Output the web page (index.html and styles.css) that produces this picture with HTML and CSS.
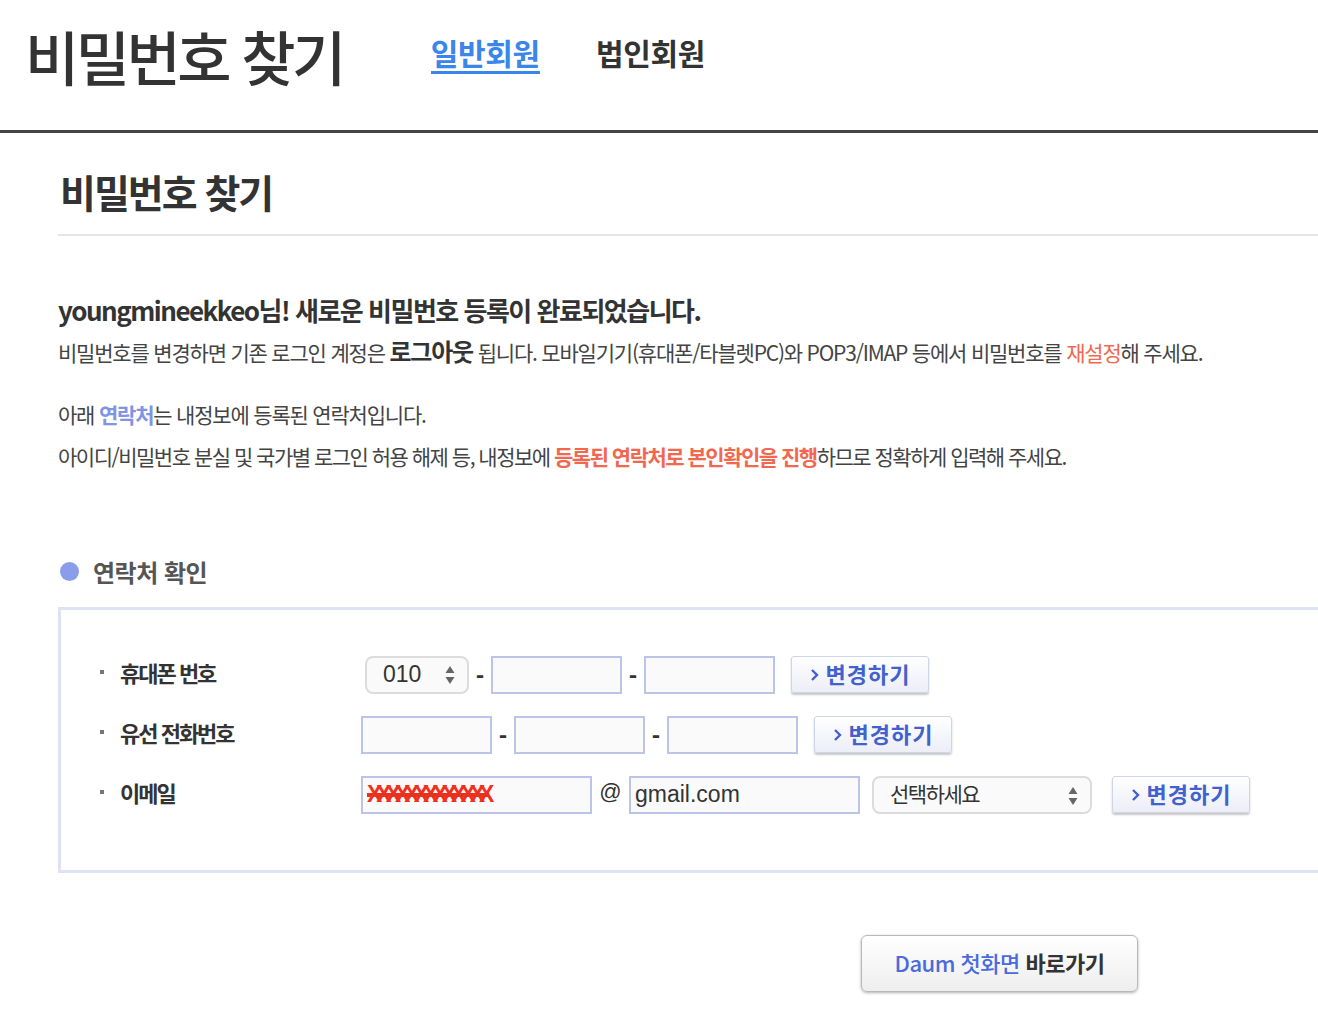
FILE: index.html
```html
<!DOCTYPE html>
<html lang="ko">
<head>
    <meta charset="UTF-8">
    <meta name="viewport" content="width=device-width, initial-scale=1.0">
    <title>비밀번호 찾기</title>
    <link rel="stylesheet" href="styles.css">
</head>
<body>
    <div class="top-header">
        <h1 class="top-title">비밀번호 찾기</h1>
        <ul class="member-tabs">
            <li class="tab tab-on">일반회원</li>
            <li class="tab">법인회원</li>
        </ul>
    </div>

    <div class="content">
        <h2 class="page-title">비밀번호 찾기</h2>

        <div class="notice">
            <p class="notice-head">youngmineekkeo님! 새로운 비밀번호 등록이 완료되었습니다.</p>
            <p class="notice-text">비밀번호를 변경하면 기존 로그인 계정은 <strong class="big">로그아웃</strong> 됩니다. 모바일기기(휴대폰/타블렛PC)와 POP3/IMAP 등에서 비밀번호를 <em class="red">재설정</em>해 주세요.</p>
            <p class="notice-text gap-top">아래 <em class="blue">연락처</em>는 내정보에 등록된 연락처입니다.</p>
            <p class="notice-text tight">아이디/비밀번호 분실 및 국가별 로그인 허용 해제 등, 내정보에 <em class="red strong">등록된 연락처로 본인확인을 진행</em>하므로 정확하게 입력해 주세요.</p>
        </div>

        <h3 class="section-title"><span class="dot"></span>연락처 확인</h3>

        <div class="contact-box">
            <div class="contact-row">
                <div class="contact-label"><span class="bullet"></span>휴대폰 번호</div>
                <div class="contact-fields">
                    <div class="select select-num">
                        <span>010</span>
                        <svg class="arrows" width="10" height="20" viewBox="0 0 10 20"><path d="M5 1 L9.5 8 H0.5 Z M0.5 12 H9.5 L5 19 Z" fill="#666"/></svg>
                    </div>
                    <span class="sep">-</span>
                    <input class="field" type="text">
                    <span class="sep">-</span>
                    <input class="field" type="text">
                    <button class="change-btn"><svg class="chev" width="9" height="14" viewBox="0 0 9 14"><path d="M2 2 L7 7 L2 12" fill="none" stroke="#4161cc" stroke-width="2.4"/></svg>변경하기</button>
                </div>
            </div>

            <div class="contact-row">
                <div class="contact-label"><span class="bullet"></span>유선 전화번호</div>
                <div class="contact-fields">
                    <input class="field" type="text">
                    <span class="sep">-</span>
                    <input class="field" type="text">
                    <span class="sep">-</span>
                    <input class="field" type="text">
                    <button class="change-btn"><svg class="chev" width="9" height="14" viewBox="0 0 9 14"><path d="M2 2 L7 7 L2 12" fill="none" stroke="#4161cc" stroke-width="2.4"/></svg>변경하기</button>
                </div>
            </div>

            <div class="contact-row">
                <div class="contact-label"><span class="bullet"></span>이메일</div>
                <div class="contact-fields">
                    <input class="field field-wide redacted" type="text" value="XXXXXXXXXXXXX">
                    <span class="at">@</span>
                    <input class="field field-wide" type="text" value="gmail.com">
                    <div class="select select-domain">
                        <span>선택하세요</span>
                        <svg class="arrows" width="10" height="20" viewBox="0 0 10 20"><path d="M5 1 L9.5 8 H0.5 Z M0.5 12 H9.5 L5 19 Z" fill="#666"/></svg>
                    </div>
                    <button class="change-btn change-btn-far"><svg class="chev" width="9" height="14" viewBox="0 0 9 14"><path d="M2 2 L7 7 L2 12" fill="none" stroke="#4161cc" stroke-width="2.4"/></svg>변경하기</button>
                </div>
            </div>
        </div>

        <div class="bottom-actions">
            <button class="home-btn"><span class="daum">Daum 첫화면</span> 바로가기</button>
        </div>
    </div>
</body>
</html>
```

FILE: styles.css
```css
body {
    margin: 0;
    background: #fff;
    color: #444;
    font-family: "Noto Sans CJK KR", "Noto Sans", sans-serif;
    overflow-x: hidden;
}

/* 상단 헤더 */
.top-header {
    display: flex;
    align-items: center;
    height: 130px;
    padding-left: 25px;
    border-bottom: 3px solid #444;
}

.top-title {
    margin: 0 0 20px;
    font-size: 59px;
    font-weight: 500;
    letter-spacing: -3.5px;
    color: #333;
    line-height: 1;
}

.member-tabs {
    display: flex;
    gap: 56px;
    list-style: none;
    margin: 0 0 22px 88px;
    padding: 0;
}

.tab {
    font-size: 30px;
    font-weight: 700;
    letter-spacing: -0.3px;
    color: #333;
    line-height: 1.2;
    padding-bottom: 1px;
}

.tab-on {
    color: #3b86ea;
    border-bottom: 3px solid #3b86ea;
}

/* 본문 */
.content {
    padding-left: 58px;
}

.page-title {
    margin: 0;
    padding: 33px 0 17px 2px;
    font-size: 39px;
    font-weight: 700;
    letter-spacing: -2px;
    color: #333;
    line-height: 1.3;
    border-bottom: 2px solid #e6e6e6;
}

.notice {
    padding-top: 54px;
}

.notice p {
    margin: 0;
}

.notice-head {
    font-size: 26px;
    font-weight: 700;
    letter-spacing: -1.5px;
    color: #333;
    line-height: 40px;
}

.notice-text {
    font-size: 21px;
    letter-spacing: -1.2px;
    line-height: 42px;
    color: #444;
}

.tight {
    letter-spacing: -1.5px;
}

.gap-top {
    margin-top: 20px !important;
}

.big {
    font-size: 24px;
    font-weight: 700;
    color: #333;
}

.red {
    font-style: normal;
    color: #f2684f;
}

.strong {
    font-weight: 700;
}

.blue {
    font-style: normal;
    font-weight: 700;
    color: #8194e4;
}

.section-title {
    display: flex;
    align-items: center;
    gap: 14px;
    margin: 78px 0 18px 2px;
    font-size: 24px;
    font-weight: 700;
    color: #555;
    letter-spacing: -0.5px;
    line-height: 34px;
}

.dot {
    width: 19px;
    height: 19px;
    border-radius: 50%;
    background: #8a9deb;
}

/* 연락처 박스 */
.contact-box {
    display: flex;
    flex-direction: column;
    gap: 22px;
    border: 3px solid #dde2f5;
    border-right: 0;
    padding: 46px 0 56px;
}

.contact-row {
    display: flex;
    align-items: center;
    height: 38px;
}

.contact-label {
    display: flex;
    align-items: center;
    width: 300px;
    padding: 0 0 6px 39px;
    box-sizing: border-box;
    font-size: 22px;
    font-weight: 700;
    letter-spacing: -2px;
    color: #333;
}

.bullet {
    width: 4px;
    height: 4px;
    background: #777;
    margin-right: 16px;
}

.contact-fields {
    display: flex;
    align-items: center;
}

.field {
    width: 131px;
    height: 38px;
    box-sizing: border-box;
    border: 2px solid #bcc4ea;
    background: #fafafa;
    padding: 0 4px;
    font-family: "Liberation Sans", Arial, sans-serif;
    font-size: 23px;
    color: #333;
    outline: none;
}

.field-wide {
    width: 231px;
}

.redacted {
    color: #f0301c;
    font-weight: 700;
    letter-spacing: -6px;
    text-decoration: line-through;
    text-decoration-color: #e8321e;
    text-decoration-thickness: 4px;
}

.sep {
    width: 22px;
    text-align: center;
    font-size: 22px;
    font-weight: 900;
    color: #333;
}

.at {
    width: 37px;
    text-align: center;
    font-family: "Liberation Sans", Arial, sans-serif;
    font-size: 22px;
    color: #333;
    margin-top: -6px;
}

.select {
    display: flex;
    align-items: center;
    justify-content: space-between;
    height: 38px;
    box-sizing: border-box;
    border: 2px solid #dcdcdc;
    border-radius: 8px;
    background: #fafafa;
    padding: 0 12px 0 16px;
    color: #333;
}

.select-num {
    width: 104px;
    margin: 0 0 0 4px;
    font-family: "Liberation Sans", Arial, sans-serif;
    font-size: 23px;
}

.select-domain {
    width: 220px;
    margin-left: 12px;
    font-size: 21px;
    letter-spacing: -1.5px;
    padding-bottom: 4px;
}

.select-domain .arrows {
    margin-top: 6px;
}

.change-btn {
    display: flex;
    align-items: center;
    justify-content: center;
    gap: 7px;
    margin-left: 16px;
    width: 138px;
    height: 37px;
    padding: 0 0 3px;
    border: 1px solid #cfd4e6;
    border-radius: 3px;
    background: linear-gradient(#ffffff, #eceef8);
    box-shadow: 0 2px 2px rgba(0, 0, 0, 0.22);
    font-family: "Noto Sans CJK KR", sans-serif;
    font-size: 22px;
    font-weight: 700;
    letter-spacing: 1px;
    color: #4161cc;
    cursor: pointer;
}

.chev {
    margin-top: 3px;
}

.change-btn-far {
    margin-left: 20px;
}

/* 하단 버튼 */
.bottom-actions {
    display: flex;
    padding: 62px 0 40px 803px;
}

.home-btn {
    width: 277px;
    height: 57px;
    padding-bottom: 3px;
    border: 1px solid #b8b8b8;
    border-radius: 6px;
    background: linear-gradient(#ffffff, #eeeeee);
    box-shadow: 0 1px 3px rgba(0, 0, 0, 0.3);
    font-family: "Noto Sans CJK KR", sans-serif;
    font-size: 22px;
    font-weight: 700;
    color: #333;
    letter-spacing: -0.5px;
    cursor: pointer;
}

.daum {
    font-weight: 500;
    color: #4a6bdc;
}
```
